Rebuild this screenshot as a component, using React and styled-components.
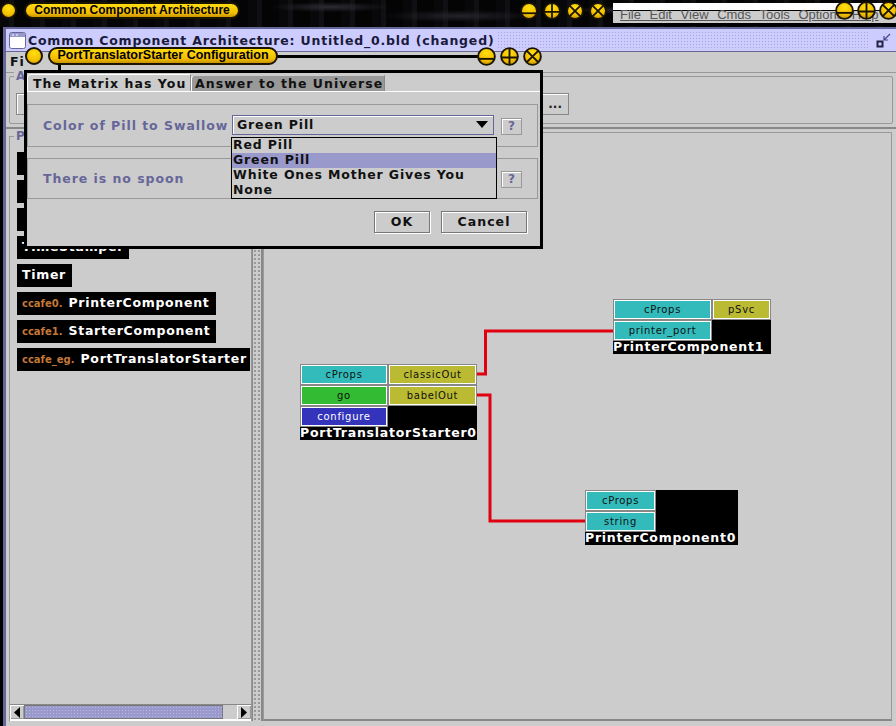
import React from 'react';
import styled, { createGlobalStyle } from 'styled-components';

const GlobalStyle = createGlobalStyle`
    html, body { margin: 0; padding: 0; background: #000; }
    * { box-sizing: border-box; }
`;

const uiFont = `'DejaVu Sans', sans-serif`;

const Screen = styled.div`
    position: relative;
    width: 896px;
    height: 726px;
    overflow: hidden;
    background: #000;
    font-family: ${uiFont};
`;

// 맨 위 데스크탑 바
const DesktopBar = styled.div`
    height: 27px;
    display: flex;
    padding: 2px 0 0 0;
    background:
        radial-gradient(ellipse 60px 5px at 330px 7px, #2c2c34, transparent),
        radial-gradient(ellipse 80px 6px at 460px 16px, #23232a, transparent),
        radial-gradient(ellipse 50px 4px at 620px 10px, #25252e, transparent),
        repeating-linear-gradient(90deg, #08080a 0 9px, #101014 9px 14px, #040405 14px 31px);
`;

const Ball = styled.div`
    position: relative;
    flex: none;
    width: ${p => p.size || 17}px;
    height: ${p => p.size || 17}px;
    border-radius: 50%;
    border: 2px solid #1a1400;
    background: radial-gradient(circle at 50% 30%, #ffe010, #f4c000 60%, #b98a00);
`;

const Pill = styled.div`
    position: relative;
    flex: none;
    height: ${p => p.h || 17}px;
    width: ${p => p.w}px;
    margin-left: ${p => p.gap}px;
    border-radius: 9px;
    border: 2px solid #1a1400;
    background: linear-gradient(#ffdc10, #f4bc00 70%, #c79600);
    color: #000;
    font: bold ${p => p.fs || 12}px/13px 'Liberation Sans', sans-serif;
    text-align: center;
    white-space: nowrap;
`;

const WmIcon = ({ kind, size = 19 }) => (
    <svg width={size} height={size} viewBox="0 0 20 20" style={{ flex: 'none', display: 'block' }}>
        <defs>
            <radialGradient id={`wm${kind}`} cx="50%" cy="30%" r="75%">
                <stop offset="0" stopColor="#ffe010" />
                <stop offset="0.6" stopColor="#f4c000" />
                <stop offset="1" stopColor="#b98a00" />
            </radialGradient>
        </defs>
        <circle cx="10" cy="10" r="8.8" fill={`url(#wm${kind})`} stroke="#1a1400" strokeWidth="2" />
        {kind === 'min' && <path d="M2 12.5H18" stroke="#1a1400" strokeWidth="2" />}
        {kind === 'max' && <path d="M2 11H18M10 2V18" stroke="#1a1400" strokeWidth="2" />}
        {kind === 'close' && <path d="M4 4L16 16M16 4L4 16" stroke="#1a1400" strokeWidth="2" />}
    </svg>
);

const WmGroup = styled.div`
    display: flex;
    gap: ${p => p.gap || 4}px;
    margin-left: ${p => p.left}px;
`;

const BackWindow = styled.div`
    position: absolute;
    left: 613px;
    top: 3px;
    width: 283px;
    height: 23px;
    border-bottom: 3px solid #000;
    background: linear-gradient(#fff 0 7px, #000 7px 8px, #ccc 8px);
    font: 13px/16px 'Liberation Sans', sans-serif;
    color: #555;
    white-space: nowrap;
    overflow: hidden;
    padding: 4px 0 0 7px;
    word-spacing: 5px;
    text-decoration: underline;
`;

const BackButtons = styled.div`
    position: absolute;
    left: 835px;
    top: 1px;
    display: flex;
    gap: 3px;
`;

const MainWindow = styled.div`
    height: 699px;
    margin-left: 3px;
    background: #ccc;
    border-top: 2px solid #666699;
    border-left: 3px solid #666699;
    display: flex;
    flex-direction: column;
`;

const TitleBar = styled.div`
    height: 23px;
    flex: none;
    display: flex;
    align-items: center;
    padding: 0 5px 0 3px;
    background: #ccccff;
    border-bottom: 1px solid #666699;
    color: #1a1a3a;
    font-size: 12.5px;
    font-weight: bold;
    letter-spacing: 0.8px;
    white-space: nowrap;
    border-top: 1px solid #ccccff;
`;

const TitleText = styled.span`
    margin-left: 2px;
`;

const TitleDots = styled.div`
    flex: 1;
    align-self: stretch;
    margin: 1px 6px 1px 3px;
    background-image: radial-gradient(#a8a8d8 40%, transparent 45%);
    background-size: 3px 3px;
`;

const MenuBar = styled.div`
    height: 21px;
    flex: none;
    padding: 0 0 0 4px;
    font-size: 12.5px;
    font-weight: bold;
    line-height: 20px;
    letter-spacing: 1px;
    color: #111;
    border-bottom: 1px solid #999;
`;

const ToolbarBox = styled.div`
    flex: none;
    position: relative;
    height: 48px;
    margin: 3px 3px 0 3px;
    border: 1px solid #999;
    border-radius: 2px;
    padding: 16px 0 0 6px;
`;

const Legend = styled.span`
    position: absolute;
    left: 4px;
    top: -8px;
    padding: 0 2px;
    background: #ccc;
    color: #666699;
    font-size: 12px;
    font-weight: bold;
    line-height: 14px;
`;

const ToolButton = styled.div`
    width: 553px;
    height: 22px;
    border: 1px solid #888;
    box-shadow: inset 1px 1px 0 #fff;
    text-align: right;
    padding-right: 6px;
    font-size: 12px;
    font-weight: bold;
    line-height: 20px;
    color: #222;
`;

const Body = styled.div`
    flex: 1;
    min-height: 0;
    display: flex;
    margin-top: 3px;
    border-top: 2px solid #888;
    padding-bottom: 5px;
`;

const PalettePanel = styled.div`
    position: relative;
    flex: none;
    width: 243px;
    margin: 7px 0 0 3px;
    border: 1px solid #999;
    border-bottom: 0;
    display: flex;
    flex-direction: column;
`;

const PaletteList = styled.div`
    flex: 1;
    min-height: 0;
    padding: 15px 0 0 7px;
    display: flex;
    flex-direction: column;
    gap: 5px;
    overflow: hidden;
`;

const PaletteItem = styled.div`
    flex: none;
    align-self: flex-start;
    width: ${p => p.w}px;
    height: 23px;
    background: #000;
    color: #fff;
    padding: 0 0 0 5px;
    font-size: 12.5px;
    font-weight: bold;
    line-height: 22px;
    letter-spacing: 0.7px;
    white-space: nowrap;
    overflow: hidden;
`;

const Prefix = styled.span`
    color: #c47838;
    font-size: 10px;
    letter-spacing: 0;
    margin-right: 6px;
`;

const ScrollBar = styled.div`
    flex: none;
    height: 17px;
    display: flex;
    align-items: stretch;
    background: #ccc;
    border-top: 1px solid #888;
    border-bottom: 2px solid #fff;
`;

const ScrollArrow = styled.div`
    flex: none;
    width: 14px;
    display: flex;
    align-items: center;
    justify-content: center;
    box-shadow: inset 1px 1px 0 #fff, inset -1px -1px 0 #999;
`;

const ScrollThumb = styled.div`
    flex: none;
    width: 199px;
    background-color: #9999cc;
    background-image: radial-gradient(#b8b8e8 40%, transparent 45%);
    background-size: 3px 3px;
    border: 1px solid #777;
`;

const ScrollRest = styled.div`
    flex: 1;
`;

const Splitter = styled.div`
    flex: none;
    width: 11px;
    border-left: 1px solid #888;
    border-right: 2px solid #888;
    background-color: #ccc;
    background-image: radial-gradient(#999 35%, transparent 40%);
    background-size: 4px 4px;
`;

const Canvas = styled.div`
    position: relative;
    flex: 1;
    margin: 3px 4px 0 0;
    border: 1px solid #999;
    border-bottom: 2px solid #888;
`;

const Wires = styled.svg`
    position: absolute;
    left: 0;
    top: 0;
    width: 100%;
    height: 100%;
`;

// 캔버스 위의 컴포넌트 노드 (x, y 는 자유 배치)
const Node = styled.div`
    position: absolute;
    left: ${p => p.x}px;
    top: ${p => p.y}px;
    width: ${p => p.w}px;
    background: #000;
    display: grid;
    grid-template-columns: ${p => p.cols};
`;

const portColors = { cyan: '#33bbbb', olive: '#bbbb33', green: '#33bb33', blue: '#3333bb' };

const Port = styled.div`
    height: 21px;
    grid-column: ${p => p.col || 'auto'};
    background: ${p => portColors[p.tone]};
    border: 1px solid #888;
    box-shadow: inset 0 0 0 1px #fff;
    color: ${p => (p.tone === 'blue' ? '#fff' : '#111')};
    font-size: 10px;
    line-height: 19px;
    letter-spacing: 0.7px;
    text-align: center;
    white-space: nowrap;
`;

const NodeName = styled.div`
    grid-column: 1 / -1;
    height: 13px;
    color: #fff;
    font-size: 12.5px;
    font-weight: bold;
    line-height: 12px;
    letter-spacing: 0.75px;
    white-space: nowrap;
`;

// 설정 다이얼로그
const DialogDecor = styled.div`
    position: absolute;
    left: 25px;
    top: 47px;
    width: 518px;
    height: 23px;
    display: flex;
    align-items: flex-start;
    &::before {
        content: '';
        position: absolute;
        left: 33px;
        top: 8px;
        width: 420px;
        height: 15px;
        border-top: 3px solid #000;
        border-left: 3px solid #000;
    }
`;

const DialogButtons = styled.div`
    position: relative;
    margin-left: 199px;
    display: flex;
    gap: 4px;
`;

const Dialog = styled.div`
    position: absolute;
    left: 24px;
    top: 70px;
    width: 519px;
    height: 179px;
    border: 3px solid #000;
    background: #ccc;
    padding-top: 2px;
`;

const Tabs = styled.div`
    display: flex;
    height: 17px;
    border-bottom: 1px solid #fff;
    align-items: flex-end;
`;

const Tab = styled.div`
    height: ${p => (p.active ? 17 : 16)}px;
    width: ${p => p.w}px;
    background: ${p => (p.active ? '#ccc' : '#999')};
    border-left: 1px solid #fff;
    border-top: 1px solid ${p => (p.active ? '#fff' : '#ccc')};
    border-right: 1px solid #888;
    border-top-left-radius: 4px;
    padding-left: ${p => (p.active ? 5 : 3)}px;
    font-size: 12.5px;
    font-weight: bold;
    line-height: ${p => (p.active ? 17 : 15)}px;
    letter-spacing: 1.05px;
    color: #111;
    white-space: nowrap;
`;

const PropRow = styled.div`
    height: ${p => p.h}px;
    margin: ${p => p.top}px 2px 0 0;
    border: 1px solid #999;
    display: flex;
    align-items: center;
    padding: 0 0 1px 15px;
`;

const PropLabel = styled.div`
    width: 189px;
    flex: none;
    color: #666699;
    font-size: 12.5px;
    font-weight: bold;
    letter-spacing: 0.95px;
    white-space: nowrap;
`;

const Spacer = styled.div`
    flex: none;
    width: 262px;
`;

const SelectBox = styled.div`
    flex: none;
    width: 262px;
    height: 20px;
    border: 1px solid #666699;
    box-shadow: inset 1px 1px 0 #fff;
    display: flex;
    align-items: center;
    justify-content: space-between;
    padding: 0 5px 2px 4px;
    font-size: 12.5px;
    font-weight: bold;
    letter-spacing: 0.85px;
    color: #111;
`;

const HelpButton = styled.div`
    flex: none;
    width: 21px;
    height: 17px;
    margin: 2px 0 0 7px;
    border: 1px solid #999;
    box-shadow: inset 1px 1px 0 #fff;
    color: #666699;
    font-size: 12px;
    font-weight: bold;
    line-height: 15px;
    text-align: center;
`;

const DialogActions = styled.div`
    display: flex;
    justify-content: flex-end;
    gap: 11px;
    padding: 12px 13px 0 0;
`;

const ActionButton = styled.div`
    width: ${p => p.w}px;
    height: 22px;
    border: 1px solid #777;
    box-shadow: inset 1px 1px 0 #fff, 1px 1px 0 #fff;
    font-size: 12.5px;
    font-weight: bold;
    line-height: 20px;
    letter-spacing: 1.05px;
    text-align: center;
    color: #111;
`;

// 콤보박스 드롭다운
const Dropdown = styled.div`
    position: absolute;
    left: 204px;
    top: 64px;
    width: 266px;
    height: 62px;
    border: 1px solid #000;
    background: #ccc;
`;

const DropItem = styled.div`
    height: 15px;
    padding-left: 1px;
    background: ${p => (p.selected ? '#9999cc' : 'transparent')};
    font-size: 12.5px;
    font-weight: bold;
    line-height: 13px;
    letter-spacing: 0.85px;
    color: #111;
    white-space: nowrap;
`;

const WindowGlyph = () => (
    <svg width="17" height="17" viewBox="0 0 17 17" style={{ flex: 'none' }}>
        <rect x="0.5" y="0.5" width="16" height="16" rx="2" fill="#fff" stroke="#666699" />
        <rect x="1" y="1" width="15" height="4" fill="#9999cc" />
        <path d="M3 3H5M7 3H9" stroke="#fff" />
    </svg>
);

const ShrinkGlyph = () => (
    <svg width="15" height="15" viewBox="0 0 15 15" style={{ flex: 'none' }}>
        <rect x="1.5" y="8.5" width="5" height="5" fill="none" stroke="#222244" strokeWidth="2" />
        <path d="M14 1L8 7M8 3V7H12" fill="none" stroke="#444488" strokeWidth="1.2" />
    </svg>
);

const Arrow = ({ dir }) => (
    <svg width="8" height="11" viewBox="0 0 8 11">
        <path d={dir === 'left' ? 'M7 0V11L1 5.5Z' : 'M1 0V11L7 5.5Z'} fill="#000" />
    </svg>
);

const App = () => (
    <Screen>
        <GlobalStyle />
        <DesktopBar>
            <Ball />
            <Pill w={216} gap={7}>Common Component Architecture</Pill>
            <WmGroup left={280} gap={5}>
                <WmIcon kind="min" size={18} />
                <WmIcon kind="max" size={18} />
                <WmIcon kind="close" size={18} />
                <WmIcon kind="close" size={18} />
            </WmGroup>
        </DesktopBar>
        <BackWindow>File Edit View Cmds Tools Options Help</BackWindow>
        <BackButtons>
            <WmIcon kind="min" />
            <WmIcon kind="max" />
            <WmIcon kind="close" />
        </BackButtons>

        <MainWindow>
            <TitleBar>
                <WindowGlyph />
                <TitleText>Common Component Architecture: Untitled_0.bld (changed)</TitleText>
                <TitleDots />
                <ShrinkGlyph />
            </TitleBar>
            <MenuBar>Fi</MenuBar>
            <ToolbarBox>
                <Legend>A</Legend>
                <ToolButton>...</ToolButton>
            </ToolbarBox>
            <Body>
                <PalettePanel>
                    <Legend>P</Legend>
                    <PaletteList>
                        <PaletteItem w={60} />
                        <PaletteItem w={60} />
                        <PaletteItem w={60} />
                        <PaletteItem w={112}>TimeStamper</PaletteItem>
                        <PaletteItem w={55}>Timer</PaletteItem>
                        <PaletteItem w={199}><Prefix>ccafe0.</Prefix>PrinterComponent</PaletteItem>
                        <PaletteItem w={199}><Prefix>ccafe1.</Prefix>StarterComponent</PaletteItem>
                        <PaletteItem w={233}><Prefix>ccafe_eg.</Prefix>PortTranslatorStarter</PaletteItem>
                    </PaletteList>
                    <ScrollBar>
                        <ScrollArrow><Arrow dir="left" /></ScrollArrow>
                        <ScrollThumb />
                        <ScrollRest />
                        <ScrollArrow><Arrow dir="right" /></ScrollArrow>
                    </ScrollBar>
                </PalettePanel>
                <Splitter />
                <Canvas>
                    <Wires>
                        <path d="M213 241H221.5V198H349" fill="none" stroke="#e00010" strokeWidth="3" />
                        <path d="M213 262H226V388H321" fill="none" stroke="#e00010" strokeWidth="3" />
                    </Wires>
                    <Node x={36} y={231} w={177} cols="88px 89px">
                        <Port tone="cyan">cProps</Port>
                        <Port tone="olive">classicOut</Port>
                        <Port tone="green">go</Port>
                        <Port tone="olive">babelOut</Port>
                        <Port tone="blue">configure</Port>
                        <NodeName>PortTranslatorStarter0</NodeName>
                    </Node>
                    <Node x={349} y={166} w={158} cols="99px 59px">
                        <Port tone="cyan">cProps</Port>
                        <Port tone="olive">pSvc</Port>
                        <Port tone="cyan" col="1">printer_port</Port>
                        <NodeName>PrinterComponent1</NodeName>
                    </Node>
                    <Node x={321} y={357} w={153} cols="71px 82px">
                        <Port tone="cyan" col="1">cProps</Port>
                        <Port tone="cyan" col="1">string</Port>
                        <NodeName>PrinterComponent0</NodeName>
                    </Node>
                </Canvas>
            </Body>
        </MainWindow>

        <DialogDecor>
            <Ball size={18} />
            <Pill w={230} gap={5} h={18} fs={12.5}>PortTranslatorStarter Configuration</Pill>
            <DialogButtons>
                <WmIcon kind="min" />
                <WmIcon kind="max" />
                <WmIcon kind="close" />
            </DialogButtons>
        </DialogDecor>
        <Dialog>
            <Tabs>
                <Tab active w={164}>The Matrix has You</Tab>
                <Tab w={194}>Answer to the Universe</Tab>
            </Tabs>
            <PropRow top={12} h={43}>
                <PropLabel>Color of Pill to Swallow</PropLabel>
                <SelectBox>
                    Green Pill
                    <svg width="12" height="7" viewBox="0 0 12 7"><path d="M0 0H12L6 7Z" fill="#000" /></svg>
                </SelectBox>
                <HelpButton>?</HelpButton>
            </PropRow>
            <PropRow top={11} h={41}>
                <PropLabel>There is no spoon</PropLabel>
                <Spacer />
                <HelpButton>?</HelpButton>
            </PropRow>
            <DialogActions>
                <ActionButton w={56}>OK</ActionButton>
                <ActionButton w={86}>Cancel</ActionButton>
            </DialogActions>
            <Dropdown>
                <DropItem>Red Pill</DropItem>
                <DropItem selected>Green Pill</DropItem>
                <DropItem>White Ones Mother Gives You</DropItem>
                <DropItem>None</DropItem>
            </Dropdown>
        </Dialog>
    </Screen>
);

export default App;
